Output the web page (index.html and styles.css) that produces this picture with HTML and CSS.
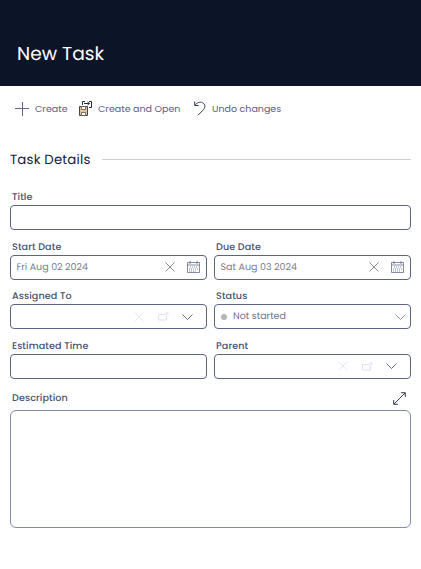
FILE: index.html
```html
<!DOCTYPE html>
<html lang="en">
<head>
<meta charset="utf-8">
<title>New Task</title>
<link rel="stylesheet" href="styles.css">
</head>
<body>
<svg class="defs" aria-hidden="true">
  <symbol id="x" viewBox="0 0 10 10"><path d="M.5 .5l9 9M9.500 .5l-9 9"/></symbol>
  <symbol id="cal" viewBox="0 0 13 12"><path d="M.5 1.500h12v10H.5zM.5 4h12M3 0v3M10 0v3"/><path stroke-dasharray="1 1" d="M3 6h8M2 8h9M2 10h7"/></symbol>
  <symbol id="open" viewBox="0 0 11 9"><path d="M7 2.500H.5v5.500h8V4M7 4l3-3M7.500 1H10v2"/></symbol>
  <symbol id="chev" viewBox="0 0 11 6"><path d="M.5 .5l5 5 5-5"/></symbol>
</svg>
<header class="header"><h1>New Task</h1></header>
<nav class="toolbar">
  <button class="create"><svg width="14" height="14" viewBox="0 0 14 14"><path stroke="#70618c" d="M0 6.500h14M7.500 0v14"/></svg><span>Create</span></button>
  <button class="create-open"><svg width="14" height="15" viewBox="0 0 14 15"><path fill="#e2c49c" stroke="#4b4542" d="M.5 5.500h8v9h-8z"/><path fill="#fff" stroke="#555" stroke-width=".8" d="M2.500 5.500h4v3h-4zM2.500 11.500h4v3h-4z"/><path stroke="#252a38" d="M3.500 4V.5H6M10 .5h2.500v6H10M5 2.500h5.500M8.500 1l2 1.500-2 1.500"/></svg><span>Create and Open</span></button>
  <button class="undo"><svg width="12" height="15" viewBox="0 0 12 15"><path stroke="#303950" d="M.7 .5v4h4M1 4.300C3 1.500 6 .5 8.500 1.700c3 1.500 3 4.500 1 7L4 14.200"/></svg><span>Undo changes</span></button>
</nav>
<main>
  <h2>Task Details</h2>
  <form class="grid">
    <div class="field wide"><label>Title</label><div class="box"></div></div>
    <div class="field"><label>Start Date</label><div class="box date"><span>Fri Aug 02 2024</span><svg class="x"><use href="#x"/></svg><svg class="cal"><use href="#cal"/></svg></div></div>
    <div class="field"><label>Due Date</label><div class="box date"><span>Sat Aug 03 2024</span><svg class="x"><use href="#x"/></svg><svg class="cal"><use href="#cal"/></svg></div></div>
    <div class="field"><label>Assigned To</label><div class="box lookup"><svg class="x"><use href="#x"/></svg><svg class="open"><use href="#open"/></svg><svg class="chev"><use href="#chev"/></svg></div></div>
    <div class="field"><label>Status</label><div class="box status"><i class="dot"></i><span>Not started</span><svg class="chev"><use href="#chev"/></svg></div></div>
    <div class="field"><label>Estimated Time</label><div class="box"></div></div>
    <div class="field"><label>Parent</label><div class="box lookup"><svg class="x"><use href="#x"/></svg><svg class="open"><use href="#open"/></svg><svg class="chev"><use href="#chev"/></svg></div></div>
  </form>
  <div class="desc-head"><label>Description</label><svg width="13" height="13" viewBox="0 0 13 13"><path stroke="#303a50" d="M1 12L12 1M8 .7h4.300V5M5 12.300H.7V8"/></svg></div>
  <div class="box area"></div>
</main>
</body>
</html>
```
FILE: styles.css
```css
* { box-sizing: border-box; }
body { margin: 0; background: #fff; color: #465273; font-family: Poppins, Inter, sans-serif; font-size: 9.5px; text-rendering: geometricPrecision; }
svg { display: block; fill: none; flex: none; }
.defs { display: none; }
.header { height: 86px; padding: 40px 17px 0; background: #0c1528; }
h1 { margin: 0; color: #fff; font-size: 18.7px; line-height: 28px; font-weight: 400; }
.toolbar { display: flex; height: 45px; padding-left: 15px; }
.toolbar button { display: flex; align-items: center; padding: 0; border: 0; background: none; color: #5a5c80; font: inherit; white-space: nowrap; }
.create { width: 64px; gap: 6px; }
.create-open { width: 115px; gap: 5px; }
.undo { gap: 6px; }
main { padding: 0 10px; }
h2 { display: flex; align-items: center; gap: 11px; height: 20px; margin: 18px 0 21px; padding-top: 2px; color: #18223c; font-size: 13.3px; font-weight: 400; letter-spacing: .17px; }
h2::after { content: ""; flex: 1; height: 1px; margin-top: -2px; background: #cbd0d9; }
.grid { display: grid; grid-template-columns: 197px 197px; column-gap: 7px; }
.field { height: 49.5px; }
.wide { grid-column: 1 / -1; }
label { display: block; height: 15px; padding: 1px 0 0 2px; color: #465172; font-size: 9.6px; line-height: 14px; font-weight: 500; letter-spacing: .1px; }
.box { display: flex; align-items: center; height: 25px; border: 1px solid #596583; border-radius: 4px; }
.box span { padding-top: 1px; }
.date span { width: 149px; padding-left: 5.5px; color: #747b91; }
.x { width: 10px; height: 10px; stroke: #697183; stroke-width: .8; }
.cal { width: 13px; height: 12px; margin-left: 12px; stroke: #667087; stroke-width: .8; }
.date .x { margin-left: 5px; }
.lookup { padding-left: 123px; }
.lookup .x, .open { stroke: #dce2f6; }
.open { width: 11px; height: 9px; margin-left: 14px; }
.chev { width: 11px; height: 6px; stroke: #505b73; stroke-width: .9; }
.lookup .chev { margin-left: 13px; }
.dot { width: 6px; height: 6px; margin: 0 6px; border-radius: 50%; background: #b5b5b5; }
.status span { color: #6c748b; }
.status .chev { margin: 0 4px 0 auto; stroke: #818899; }
.desc-head { display: flex; justify-content: space-between; height: 19px; padding-right: 5px; margin-top: 3px; }
.desc-head svg { margin-top: 1px; }
.area { height: 118px; border-color: #808bab; border-radius: 6px; }
```
